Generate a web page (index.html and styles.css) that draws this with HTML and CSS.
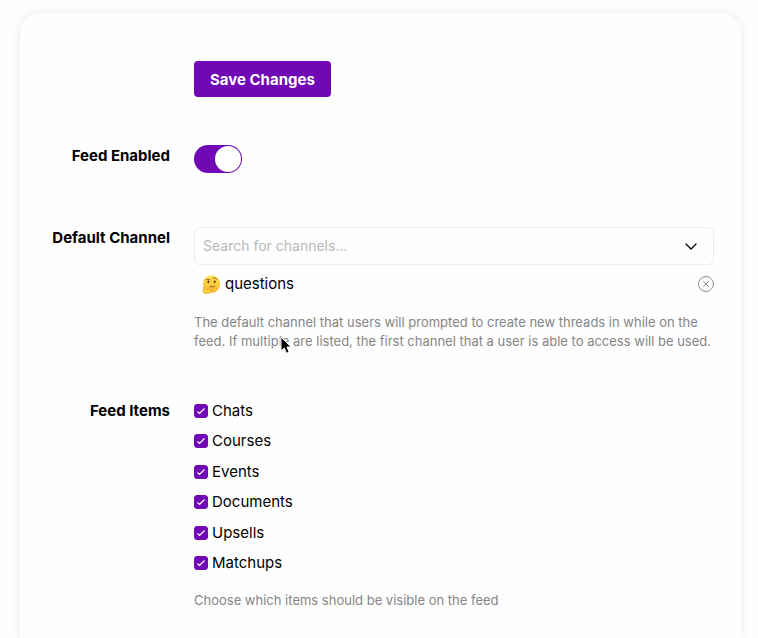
FILE: index.html
```
<!DOCTYPE html>
<html lang="en">
  <head>
    <meta charset="utf-8">
    <title>Feed Settings</title>
    <link rel="stylesheet" href="styles.css">
  </head>
  <body>
    <form class="settings-card">
      <div class="row save-row">
        <button type="button" class="save-button">Save Changes</button>
      </div>

      <div class="row toggle-row">
        <label class="row-label" for="feed-enabled">Feed Enabled</label>
        <div class="row-content">
          <input type="checkbox" class="toggle" id="feed-enabled" checked>
        </div>
      </div>

      <div class="row channel-row">
        <label class="row-label" for="channel-search">Default Channel</label>
        <div class="row-content">
          <div class="search-box">
            <input type="text" class="search-input" id="channel-search" placeholder="Search for channels...">
            <button type="button" class="icon-button" aria-label="Show channels">
              <svg width="14" height="14" viewBox="0 0 14 14" fill="none" stroke="#000" stroke-width="1.3" stroke-linecap="round" stroke-linejoin="round">
                <path d="M2 5l5 5 5-5"/>
              </svg>
            </button>
          </div>

          <div class="channel">
            <svg class="emoji" width="19" height="19" viewBox="0 0 36 36" role="img" aria-label="thinking face">
              <defs>
                <linearGradient id="face" x1="0" y1="0" x2="0" y2="1">
                  <stop offset="0" stop-color="#ffe55e"/>
                  <stop offset="1" stop-color="#f9b52c"/>
                </linearGradient>
              </defs>
              <circle cx="18" cy="17" r="16.5" fill="url(#face)"/>
              <ellipse cx="12" cy="13" rx="1.8" ry="2.4" fill="#5a3510"/>
              <ellipse cx="24" cy="13" rx="1.8" ry="2.4" fill="#5a3510"/>
              <path d="M7 9q4-2 8 0M20 6q5-3 9 2" fill="none" stroke="#8a5a1a" stroke-width="1.6" stroke-linecap="round"/>
              <path d="M15 22q5-2 9 0" fill="none" stroke="#8a5a1a" stroke-width="1.6" stroke-linecap="round"/>
              <path d="M3 24q2-2 4 1l2 3 9-4q3-1 3 1t-6 4q3 1 1 4-3 3-8 3-6-1-6-6z" fill="#ffd447" stroke="#e28b16" stroke-width="1.2" stroke-linejoin="round"/>
            </svg>
            <span class="channel-name">questions</span>
            <button type="button" class="icon-button" aria-label="Remove questions">
              <svg width="16" height="16" viewBox="0 0 16 16" fill="none" stroke="#8c8f92" stroke-linecap="round">
                <circle cx="8" cy="8" r="7.5"/>
                <path d="M5.5 5.5l5 5M10.5 5.5l-5 5"/>
              </svg>
            </button>
          </div>

          <p class="help channel-help">
            The default channel that users will prompted to create new threads in while on the feed. If multiple are listed, the first channel that a user is able to access will be used.
            <svg class="pointer" width="12" height="19" viewBox="0 0 12 19" aria-hidden="true">
              <path d="M1 1v14l3.3-3 2.2 5.3 2.6-1.1L7 11h4.2z" fill="#000" stroke="#fff"/>
            </svg>
          </p>
        </div>
      </div>

      <div class="row" role="group" aria-labelledby="feed-items">
        <span class="row-label" id="feed-items">Feed Items</span>
        <div class="row-content">
          <div class="items">
            <label class="item"><input type="checkbox" class="check" checked>Chats</label>
            <label class="item"><input type="checkbox" class="check" checked>Courses</label>
            <label class="item"><input type="checkbox" class="check" checked>Events</label>
            <label class="item"><input type="checkbox" class="check" checked>Documents</label>
            <label class="item"><input type="checkbox" class="check" checked>Upsells</label>
            <label class="item"><input type="checkbox" class="check" checked>Matchups</label>
          </div>
          <p class="help items-help">Choose which items should be visible on the feed</p>
        </div>
      </div>
    </form>
  </body>
</html>
```

FILE: styles.css
```
* {
  box-sizing: border-box;
}

body {
  margin: 0;
  padding: 13px 17px 0 20px;
  background-color: #fefefe;
  color: #000;
  font-family: Inter, "Liberation Sans", sans-serif;
  font-size: 15px;
  line-height: 22px;
}

button,
input {
  margin: 0;
  font-family: inherit;
}

.settings-card {
  min-height: calc(100vh - 13px);
  padding: 48px 27px 16px 0;
  background-color: #fefefe;
  border-radius: 20px 20px 0 0;
  box-shadow: 0 0 8px 1px rgba(0, 0, 0, 0.07);
}

.row {
  display: grid;
  grid-template-columns: 150px minmax(0, 1fr);
  column-gap: 24px;
}

.row-label {
  font-weight: 700;
  text-align: right;
}

.save-row {
  margin-bottom: 48px;
}

.save-button {
  grid-column: 2;
  justify-self: start;
  height: 36px;
  padding: 0 16px;
  background-color: #7008b5;
  color: white;
  border: none;
  border-radius: 4px;
  font-size: 15px;
  font-weight: 700;
  cursor: pointer;
}

.toggle-row {
  margin-bottom: 54px;
}

.toggle {
  appearance: none;
  display: flex;
  width: 48px;
  height: 28px;
  padding: 1px;
  background-color: #7008b5;
  border-radius: 14px;
  cursor: pointer;
}

.toggle::before {
  content: "";
  width: 26px;
  height: 26px;
  background-color: white;
  border-radius: 50%;
}

.toggle:checked {
  justify-content: flex-end;
}

.channel-row {
  margin-bottom: 49px;
}

.search-box {
  display: flex;
  align-items: center;
  height: 38px;
  padding: 0 15px 0 8px;
  border: 1px solid #ececec;
  border-radius: 6px;
}

.search-input {
  flex: 1;
  min-width: 0;
  padding: 0 0 2px;
  background: none;
  border: none;
  outline: none;
  font-size: 14px;
}

.search-input::placeholder {
  color: #b9b9b9;
}

.icon-button {
  display: flex;
  padding: 0;
  background: none;
  border: none;
  cursor: pointer;
}

.channel {
  display: flex;
  align-items: center;
  gap: 4px;
  padding: 8px 0 8px 8px;
}

.channel-name {
  flex: 1;
}

.help {
  margin: 0;
  color: #858585;
  font-size: 13px;
  line-height: 19px;
}

.channel-help {
  position: relative;
  margin-top: 10px;
}

/* mouse pointer resting on the help text */
.pointer {
  position: absolute;
  top: 23px;
  left: 86px;
}

.items {
  display: grid;
  align-content: space-between;
  min-height: 174px;
}

.item {
  display: flex;
  align-items: center;
  gap: 4px;
  justify-self: start;
}

.check {
  appearance: none;
  width: 14px;
  height: 14px;
  border: 1px solid #7008b5;
  border-radius: 3px;
}

.check:checked {
  background: #7008b5 url("data:image/svg+xml,%3Csvg xmlns='http://www.w3.org/2000/svg' viewBox='0 0 12 12'%3E%3Cpath d='M2.5 6.5l2 2 5-5' fill='none' stroke='white' stroke-width='1.2'/%3E%3C/svg%3E") center / 12px no-repeat;
}

.items-help {
  margin-top: 17px;
}
```
